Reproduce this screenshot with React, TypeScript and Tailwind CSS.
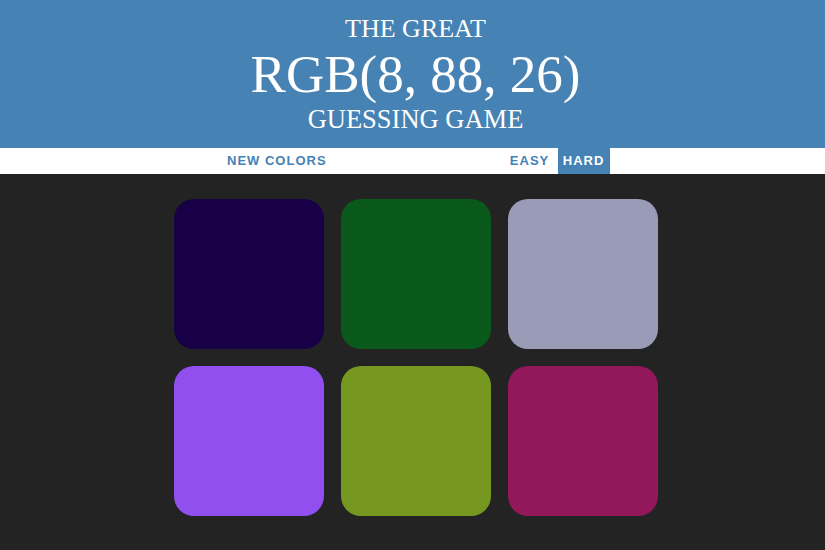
import React, { useState } from 'react';

const colors = ['#170046', '#095a1a', '#9a9bb7', '#914ff0', '#769720', '#93175b'];

const App: React.FC = () => {
    const [mode, setMode] = useState<'easy' | 'hard'>('hard');

    return (
        <div className="min-h-[550px] w-full bg-[#232323]" style={{ fontFamily: '"Liberation Sans", Arial, sans-serif' }}>
            <h1 className="flex h-[148px] flex-col items-center bg-[#4682b4] pl-[6px] pt-[14px] text-white font-normal" style={{ fontFamily: '"Liberation Serif", "Times New Roman", serif' }}>
                <span className="text-[26px] leading-[30px]">THE GREAT</span>
                <span className="text-[53px] leading-[60px]">RGB(8, 88, 26)</span>
                <span className="text-[26.5px] leading-[30px]">GUESSING GAME</span>
            </h1>
            <div className="flex h-[26px] items-stretch bg-white text-[13px] font-bold tracking-[1px] text-[#4682b4]">
                <button className="ml-[220px] px-[7px] uppercase">New Colors</button>
                <button
                    onClick={() => setMode('easy')}
                    className={`ml-[171px] w-[50px] uppercase ${mode === 'easy' ? 'bg-[#4682b4] text-white' : ''}`}
                >
                    Easy
                </button>
                <button
                    onClick={() => setMode('hard')}
                    className={`ml-[3px] w-[52px] uppercase ${mode === 'hard' ? 'bg-[#4682b4] text-white' : ''}`}
                >
                    Hard
                </button>
            </div>
            <div className="flex justify-center pl-[7px] pt-[25px]">
                <div className="grid grid-cols-[repeat(3,150px)] gap-[17px]">
                    {colors.map((c) => (
                        <div key={c} className="h-[150px] w-[150px] rounded-[20px]" style={{ backgroundColor: c }} />
                    ))}
                </div>
            </div>
        </div>
    );
};

export default App;
